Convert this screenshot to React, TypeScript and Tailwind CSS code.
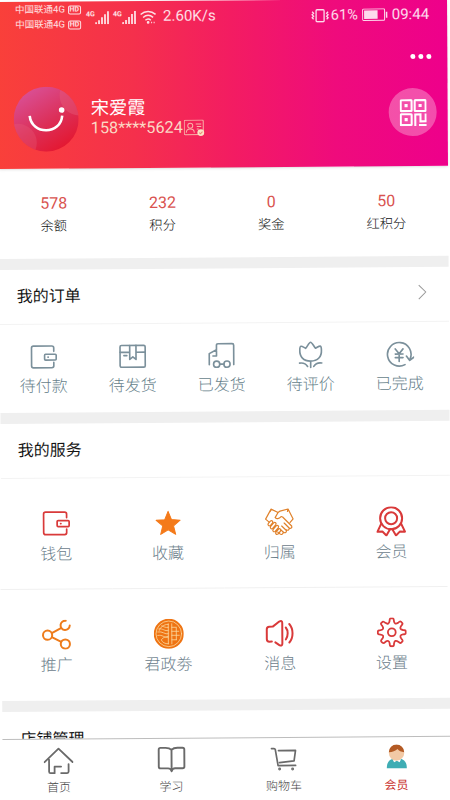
import type { ReactNode, SVGProps } from "react";

const stats = [
  { value: "578", label: "余额" },
  { value: "232", label: "积分" },
  { value: "0", label: "奖金" },
  { value: "50", label: "红积分" },
];

// Shared outline icon, colour comes from the parent's text colour
function Icon({ children, ...props }: SVGProps<SVGSVGElement>) {
  return (
    <svg
      width="30"
      height="30"
      viewBox="0 0 30 30"
      fill="none"
      stroke="currentColor"
      strokeWidth="1.7"
      strokeLinecap="round"
      strokeLinejoin="round"
      {...props}
    >
      {children}
    </svg>
  );
}

const WalletIcon = () => (
  <Icon>
    <path d="M25.5 9V5.500q0-2-2-2H4.500q-2 0-2 2V24q0 2 2 2H23.500q2 0 2-2V20.500" />
    <rect x="16" y="12" width="12" height="6" rx="1" />
    <path d="M19.500 15h.3" />
  </Icon>
);

const BoxIcon = () => (
  <Icon>
    <rect x="2" y="3.500" width="26" height="22.500" rx="1.500" />
    <path d="M2 10.500h10M18.500 10.500H28M12 3.500v14.500l3.200-2.800 3.300 2.800V3.500M6 14h3" />
  </Icon>
);

const TruckIcon = () => (
  <Icon>
    <path d="M2.200 24v-11.500l7.500-4V4q0-1.600 1.600-1.600h14.600q1.600 0 1.600 1.600v20M9.700 9.500v5.500H6M13 23.500h4.300" />
    <circle cx="9.800" cy="23.500" r="3.200" />
    <circle cx="20.500" cy="23.500" r="3.200" />
  </Icon>
);

const FlowerIcon = () => (
  <Icon>
    <path d="M15 21c-7.500 0-11.500-4.500-11.200-11.500 0-3 .3-4 1.400-4 1.400 0 2.700 1.200 4.600 2.200C11.300 6.500 13.500 1.500 15 1.500s3.700 5 5.200 6.200c1.900-1 3.200-2.200 4.600-2.200 1.100 0 1.400 1 1.400 4C26.500 16.500 22.500 21 15 21zM15 21v6.500M3.500 23c3.800-.6 6.800 1 8.300 3.500M26.500 23c-3.800-.6-6.800 1-8.300 3.500" />
  </Icon>
);

const DoneIcon = () => (
  <Icon>
    <path d="M20.500 25.300A12.200 12.200 0 1 1 25.800 19.500M22 16.500l3.400 4.500 4.600-3.500M10.500 9l4 5 4-5M14.500 14v8M10.500 14.300h8M10.500 18h8" />
  </Icon>
);

const StarIcon = () => (
  <Icon fill="currentColor" strokeWidth="1">
    <path d="M15 3.500l3.400 8.300 8.600.6-6.600 5.600 2.100 8.500L15 22l-7.500 4.500 2.100-8.500L3 12.400l8.600-.6z" />
  </Icon>
);

const HandshakeIcon = () => (
  <Icon strokeWidth="1.200">
    <path d="M1.500 12L7 2l7 3.500 2-1.500L24 2l5 10-3 3.500M1.500 12L5 15M7 2l-.8 2.500M14 5.500l-3 5c1 2 4 1.200 6-1l1.500.5 9 9c.8 2-1 3-2.500 2M20 16l5 5c.4 2-1.200 2.800-2.800 1.800M17.500 19l4.700 4.500c.3 2-1.200 2.800-2.800 1.800l-3-2.600M19 25c.2 2.500-2 3-3.300 1.800L13.500 25M24 2l-.6 2.500" />
    <path d="M4.200 16.300l2-2.300c1.500-1.300 3.200.4 2 2l-2 2.400c-1.600 1-3-.6-2-2.100zM6.500 19.300l3-3.500c1.500-1.300 3.200.4 2 2l-3 3.500c-1.600 1-3-.5-2-2zM9 22.300l3-3.500c1.500-1.300 3.200.4 2 2l-3 3.500c-1.600 1-3-.5-2-2zM11.800 25l2.400-2.800c1.500-1.300 3.200.4 2 2L13.800 27c-1.600 1-3-.5-2-2z" />
  </Icon>
);

const MedalIcon = () => (
  <Icon strokeWidth="2">
    <circle cx="15" cy="12" r="11" />
    <circle cx="15" cy="12" r="6" />
    <path d="M5 17.500L1.200 25.500l5-.3 4 4 3.800-6.500M25 17.500l3.800 8-5-.3-4 4-3.800-6.500" />
  </Icon>
);

const ShareIcon = () => (
  <Icon strokeWidth="2">
    <circle cx="5.800" cy="15.500" r="4.600" />
    <circle cx="23.500" cy="24.500" r="4.600" />
    <path d="M24 1.200a4.600 4.600 0 1 0 4 4.800M10 13.500L19.200 8.500M10 17.500l9.400 4.800" />
  </Icon>
);

const CoinIcon = () => (
  <Icon stroke="none">
    <circle cx="15" cy="15" r="15" fill="#ef7413" />
    <g stroke="#fbd9a0" strokeWidth=".8">
      <circle cx="15" cy="15" r="12.800" />
      <path d="M14.500 5v20M18 5v20M14.500 5.500c-5 0-8 3-9 6M14.500 25c-3.500 0-6-1.500-7-4 2-3 4.500-3 7-2M22.500 9v12M18 8.500h4.500M18 12.500h7M18 16.500h7.500M18 21h4.500M5 10c4-1 6 3 9.500 1.500M4 13c5-1 7 3 10.500 2M4 16.500c5-1 6 3 10.500 1M8 7c2 1 4 2 6.500 1.500" />
    </g>
  </Icon>
);

const SpeakerIcon = () => (
  <Icon strokeWidth="2">
    <path d="M7 23.500H4.500q-2.500 0-2.500-2.500V11q0-2.500 2.500-2.500H8l6.500-5q3-1.500 3 1.500v20.500q0 3-3 1.500l-4-2.700M21 9.500c2.500 3 2.500 8.500 0 12M24.500 6c4.300 5 4.300 13.500 0 18.500" />
  </Icon>
);

// Eight teeth joined by scallops
const gearPath =
  Array.from({ length: 8 }, (_, i) => {
    const at = (deg: number, r: number) => {
      const a = ((i * 45 + deg) * Math.PI) / 180;
      return `${(15 + r * Math.sin(a)).toFixed(2)} ${(15 - r * Math.cos(a)).toFixed(2)}`;
    };
    return `${i ? "L" : "M"}${at(-11, 11.4)}Q${at(-9, 14)} ${at(-4, 14)}L${at(4, 14)}Q${at(9, 14)} ${at(11, 11.4)}Q${at(22.5, 7.6)} ${at(34, 11.4)}`;
  }).join("") + "Z";

const GearIcon = () => (
  <Icon strokeWidth="1.800">
    <circle cx="15" cy="15" r="3.900" />
    <path d={gearPath} />
  </Icon>
);

const HomeIcon = () => (
  <Icon strokeWidth="1.800">
    <path d="M1 15.500L15 2 29 15.500M5.500 13v12q0 1.500 1.500 1.500h4v-6.500h6.500M17.500 26.500h6q1.500 0 1.500-1.500V17.500" />
  </Icon>
);

const BookIcon = () => (
  <Icon strokeWidth="1.900">
    <path d="M15 4C13 2 11 2 9 2H4Q2.200 2 2.200 3.800v17Q2.200 22.500 4 22.500h7.500c2 0 3 1 3.500 3 .5-2 1.500-3 3.500-3H26q1.800 0 1.800-1.700v-17Q27.800 2 26 2h-5c-2 0-4 0-6 2zM15 4v21" />
  </Icon>
);

const CartIcon = () => (
  <Icon strokeWidth="1.700">
    <path d="M3 3.500h2.500q1 0 1.300 1L9.500 20.500H27M10 5.500h17l-1.500 10.500L11 17.500" />
    <circle cx="11" cy="24" r=".6" />
    <circle cx="24" cy="24" r=".6" />
  </Icon>
);

const MemberIcon = () => (
  <Icon stroke="none">
    <path d="M5.200 24c0-6 2.500-8.500 6-9.500h8c3.500 1 6 3.500 6 9.500z" fill="#3fadb4" />
    <path d="M11 15h8.500l-1.500 3-2.700-1.500-2.800 1.500z" fill="#fff" />
    <circle cx="15" cy="8.700" r="7.700" fill="#f2c9a5" />
    <path d="M7.300 8a7.700 7.700 0 0 1 15.400 0C19.500 7.800 17.500 6.800 16 4.800c-2 2-5 3-8.700 3.200z" fill="#b35a24" />
  </Icon>
);

const orders = [
  { label: "待付款", icon: <WalletIcon /> },
  { label: "待发货", icon: <BoxIcon /> },
  { label: "已发货", icon: <TruckIcon /> },
  { label: "待评价", icon: <FlowerIcon /> },
  { label: "已完成", icon: <DoneIcon /> },
];

const services = [
  { label: "钱包", icon: <WalletIcon />, color: "text-[#d93a3a]" },
  { label: "收藏", icon: <StarIcon />, color: "text-[#f47a1a]" },
  { label: "归属", icon: <HandshakeIcon />, color: "text-[#e0822c]" },
  { label: "会员", icon: <MedalIcon />, color: "text-[#d93a3a]" },
  { label: "推广", icon: <ShareIcon />, color: "text-[#ee7c1c]" },
  { label: "君政劵", icon: <CoinIcon />, color: "text-[#ef7413]" },
  { label: "消息", icon: <SpeakerIcon />, color: "text-[#d93a3a]" },
  { label: "设置", icon: <GearIcon />, color: "text-[#d93a3a]" },
];

const tabs = [
  { label: "首页", icon: <HomeIcon /> },
  { label: "学习", icon: <BookIcon /> },
  { label: "购物车", icon: <CartIcon /> },
  { label: "会员", icon: <MemberIcon />, active: true },
];

function Carrier() {
  return (
    <div className="flex h-[15px] items-center gap-[3px] text-[9.500px] leading-none whitespace-nowrap">
      <span>中国联通4G</span>
      <span className="flex h-[9px] w-[13px] items-center justify-center rounded-[2px] border border-white/85 text-[7px] font-bold">HD</span>
    </div>
  );
}

function Signal() {
  return (
    <div className="flex items-start">
      <span className="w-[9px] text-[7px] leading-[8px] font-bold">4G</span>
      <svg width="14" height="14" viewBox="0 0 14 14" fill="currentColor">
        <path d="M0 12h1.800v2H0zM3 10h1.800v4H3zM6 7h1.800v7H6zM9 4h1.800v10H9zM12 1h1.800v13H12z" />
      </svg>
    </div>
  );
}

function StatusBar() {
  return (
    <div className="flex h-[31px] items-center pr-[18px] pl-[17px] text-[14.500px] text-white/85">
      <div className="w-[71px]">
        <Carrier />
        <Carrier />
      </div>
      <div className="flex items-center gap-[4px]">
        <Signal />
        <Signal />
        <svg width="16" height="14" viewBox="0 0 16 14" fill="none" stroke="currentColor" strokeWidth="1.500">
          <path d="M.5 4.500c4.500-4 10.500-4 15 0M3 7.500c3-2.600 7-2.600 10 0M5.300 10.300c1.600-1.500 3.800-1.500 5.400 0" />
          <circle cx="8" cy="12.500" r=".6" />
          <path d="M11 12.500h1M13.500 12.500h1" />
        </svg>
      </div>
      <span className="ml-[7px] text-[15px]">2.60K/s</span>
      <div className="ml-auto flex items-center">
        <svg width="18" height="14" viewBox="0 0 18 14" fill="none" stroke="currentColor" strokeWidth="1.300">
          <rect x="5" y="1" width="8" height="12" rx="1" />
          <path d="M1 3l1.500 1.500L1 6l1.500 1.500L1 9l1.500 1.500M17 3l-1.500 1.500L17 6l-1.500 1.500L17 9l-1.500 1.500" />
        </svg>
        <span className="ml-[2px]">61%</span>
        <svg className="ml-[4px]" width="26" height="13" viewBox="0 0 26 13" fill="none" stroke="currentColor">
          <rect x=".5" y=".5" width="22" height="11.500" rx="1" />
          <rect x="2" y="2" width="13.500" height="8.500" fill="currentColor" stroke="none" />
          <path d="M24.500 3.500v6" strokeWidth="1.500" />
        </svg>
        <span className="ml-[4px] text-[15px]">09:44</span>
      </div>
    </div>
  );
}

function Avatar() {
  return (
    <svg width="65" height="65" viewBox="0 0 65 65" fill="none">
      <defs>
        <linearGradient id="avatar" x1=".2" y1="0" x2=".8" y2="1">
          <stop offset="0" stopColor="#d9529a" />
          <stop offset=".55" stopColor="#dc2f58" />
          <stop offset="1" stopColor="#e5142b" />
        </linearGradient>
        <clipPath id="avatarClip">
          <circle cx="32.500" cy="32.500" r="32.500" />
        </clipPath>
      </defs>
      <g clipPath="url(#avatarClip)">
        <path d="M0 0h65v65H0z" fill="url(#avatar)" />
        <circle cx="4" cy="56" r="19" fill="#e8607a" opacity=".3" />
        <circle cx="66" cy="9" r="20" fill="#e8607a" opacity=".4" />
      </g>
      <path d="M16 29c2 19.500 31 19.500 32.500 0" stroke="#fff" strokeWidth="2.600" />
      <circle cx="48" cy="23.500" r="2.800" fill="#fff" />
    </svg>
  );
}

function Header() {
  return (
    <header className="h-[167px] bg-[linear-gradient(90deg,#f9403a_0%,#f5304c_30%,#f31c62_52%,#ef0b7c_75%,#ee008b_100%)] text-white shadow-sm">
      <StatusBar />
      <div className="flex h-[46px] items-center justify-end gap-[3px] pt-[7px] pr-[16px]">
        <i className="size-[5px] rounded-full bg-white" />
        <i className="size-[5px] rounded-full bg-white" />
        <i className="size-[5px] rounded-full bg-white" />
      </div>
      <div className="flex h-[80px] items-center pr-[11px] pl-[15px]">
        <Avatar />
        <div className="mb-[2px] ml-[12px]">
          <div className="text-[18.300px] leading-[21px]">宋爱霞</div>
          <div className="flex items-center text-[16.300px] leading-[19px] text-[#fbd8c4]">
            <span>158****5624</span>
            <svg className="mt-[2px] ml-px" width="21" height="17" viewBox="0 0 21 17" fill="none" stroke="#f9b3a8" strokeWidth="1">
              <rect x=".5" y=".5" width="19" height="14.500" rx="1" />
              <circle cx="6.500" cy="6" r="2.500" />
              <path d="M2.500 13c0-5 8-5 8 0M12 4.500h5.500M13 7h4.500M13 9.500h2" />
              <circle cx="17" cy="13" r="3.400" fill="#fbe3c4" stroke="none" />
              <path d="M15.500 13l1.200 1.200 2-2.200" stroke="#e88a78" />
            </svg>
          </div>
        </div>
        <div className="mb-[8px] ml-auto flex size-[48px] items-center justify-center rounded-full bg-white/30">
          <svg width="27" height="27" viewBox="0 0 26 26" fill="none" stroke="#fff" strokeWidth="2">
            <rect x="1" y="1" width="10.500" height="10.500" rx=".5" />
            <rect x="14.500" y="1" width="10.500" height="10.500" rx=".5" />
            <rect x="1" y="14.500" width="10.500" height="10.500" rx=".5" />
            <path d="M4.700 6.200h3M18.200 6.200h3M4.700 19.700h3" strokeWidth="3" />
            <path d="M15 26V14.800h5v6.700H25V14M18.500 25H26" />
          </svg>
        </div>
      </div>
    </header>
  );
}

function SectionTitle({ children }: { children: ReactNode }) {
  return <h2 className="flex h-[55px] items-center justify-between border-b border-[#f3f3f3] pl-[17px] text-[16px] text-[#151515]">{children}</h2>;
}

const Gap = () => <div className="h-[11px] bg-[#efefef]" />;

export default function App() {
  return (
    <div className="h-[800px] w-[450px] overflow-hidden bg-white font-['Roboto','Noto_Sans_CJK_SC',sans-serif]">
      {/* The whole screen leans very slightly to the left */}
      <div className="flex h-[806px] w-[449px] origin-top-left transform-[matrix(1,-0.007,0.006,1,-2,2)] flex-col">
        <Header />

        <section className="flex h-[90px] w-[448px] justify-around pt-[24px]">
          {stats.map((item) => (
            <div key={item.label} className="text-center">
              <div className="text-[16px] leading-[21px] text-[#d9534f]">{item.value}</div>
              <div className="text-[13.300px] leading-[26px] font-light text-[#111]">{item.label}</div>
            </div>
          ))}
        </section>
        <Gap />

        <section className="h-[143px]">
          <SectionTitle>
            我的订单
            <svg className="mr-[22px] mb-[4px]" width="9" height="16" viewBox="0 0 9 16" fill="none" stroke="#999">
              <path d="M1 1l7 7-7 7" />
            </svg>
          </SectionTitle>
          <div className="-ml-px grid w-[445px] grid-cols-5 pt-[18px] font-light text-[#677f8b]">
            {orders.map((item) => (
              <div key={item.label} className="flex flex-col items-center [&>svg]:size-[29px] [&>svg]:text-[#7b909b]">
                {item.icon}
                <span className="text-[16px] leading-[30px]">{item.label}</span>
              </div>
            ))}
          </div>
        </section>
        <Gap />

        <section className="h-[277px]">
          <SectionTitle>我的服务</SectionTitle>
          <div className="-ml-px grid w-[447px] grid-cols-4">
            {services.map((item) => (
              <div key={item.label} className="flex h-[111px] flex-col items-center border-b border-[#f0f0f0] pt-[30px] nth-[n+5]:border-0">
                <div className={item.color}>{item.icon}</div>
                <span className="text-[16px] leading-[31px] font-light text-[#6c808b]">{item.label}</span>
              </div>
            ))}
          </div>
        </section>
        <Gap />

        <section className="h-[27px] overflow-hidden pt-[17px] pl-[18px] text-[16px] leading-[22px] text-[#151515]">店铺管理</section>

        <nav className="grid w-[450px] flex-1 grid-cols-4 border-t border-[#bdbdbd] pt-[7px] text-[#6a6a6a]">
          {tabs.map((tab) => (
            <div key={tab.label} className="flex flex-col items-center">
              {tab.icon}
              <span className={tab.active ? "text-[12px] leading-[22px] text-[#c9302c]" : "text-[12px] leading-[22px] font-light text-[#444]"}>
                {tab.label}
              </span>
            </div>
          ))}
        </nav>
      </div>
    </div>
  );
}
